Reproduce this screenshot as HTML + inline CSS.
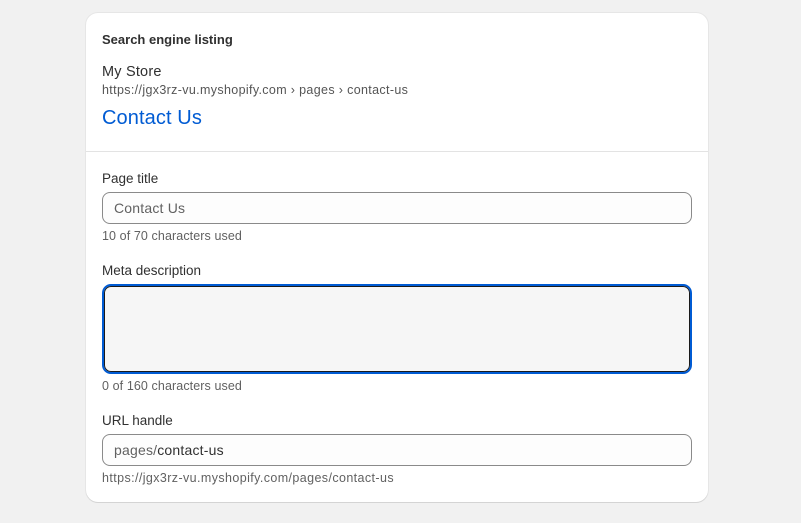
<!DOCTYPE html>
<html><head><style>
*{box-sizing:border-box;margin:0;padding:0}
body{width:801px;height:523px;background:#f1f1f1;font-family:"Liberation Sans",sans-serif;color:#303030;position:relative;overflow:hidden}
.card{position:absolute;left:86px;top:13px;width:622px;height:489px;background:#fff;border-radius:12px;box-shadow:0 1px 0 #d4d4d4,0 0 0 1px #e6e6e6}
.t{position:absolute;white-space:nowrap}
.div{position:absolute;left:0;right:0;top:138px;height:1px;background:#e3e3e3}
.inp{position:absolute;left:16px;width:590px;height:32px;border:1px solid #8a8a8a;border-radius:8px;background:#fdfdfd;font-size:14px;padding:0 0 0 11px;line-height:30px;color:#616161;letter-spacing:0.2px}
.ta{position:absolute;left:16px;top:271px;width:590px;height:90px;border:2px solid #005bd3;border-radius:9px;background:#f6f6f6;box-shadow:inset 0 0 0 1px #1a1a1a}
.help{font-size:12.5px;color:#616161;letter-spacing:0.1px}
</style></head><body>
<div class="card">
<div class="t" style="left:16px;top:19px;font-size:13px;font-weight:bold">Search engine listing</div>
<div class="t" style="left:16px;top:51px;font-size:14.5px;letter-spacing:0.2px">My Store</div>
<div class="t help" style="left:16px;top:70px;color:#555;letter-spacing:0.35px">https://jgx3rz-vu.myshopify.com › pages › contact-us</div>
<div class="t" style="left:16px;top:94px;font-size:20px;color:#005bd3;letter-spacing:0.1px">Contact Us</div>
<div class="div"></div>
<div class="t" style="left:16px;top:158px;font-size:13.5px">Page title</div>
<div class="inp" style="top:179px">Contact Us</div>
<div class="t help" style="left:16px;top:216px">10 of 70 characters used</div>
<div class="t" style="left:16px;top:250px;font-size:13.5px">Meta description</div>
<div class="ta"></div>
<div class="t help" style="left:16px;top:366px">0 of 160 characters used</div>
<div class="t" style="left:16px;top:400px;font-size:13.5px">URL handle</div>
<div class="inp" style="top:421px">pages/<span style="color:#303030">contact-us</span></div>
<div class="t help" style="left:16px;top:458px;letter-spacing:0.4px">https://jgx3rz-vu.myshopify.com/pages/contact-us</div>
</div>
</body></html>
